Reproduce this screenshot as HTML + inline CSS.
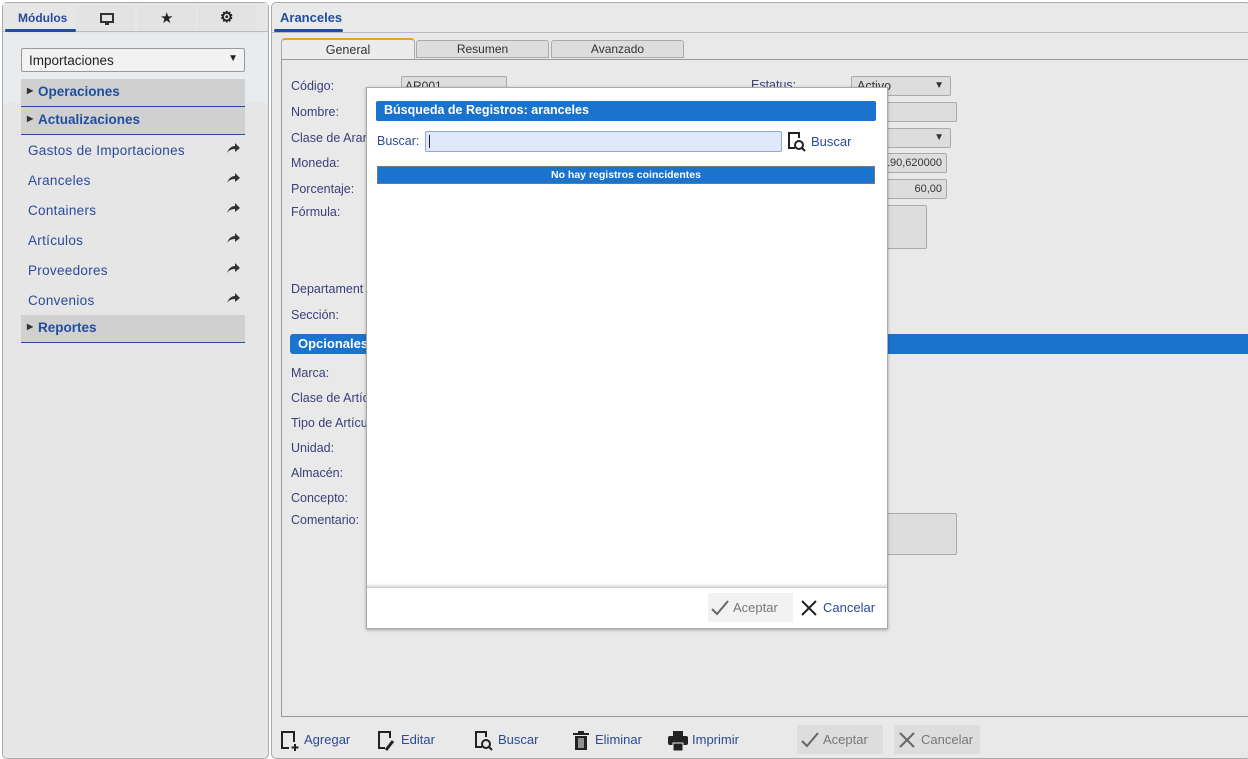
<!DOCTYPE html>
<html><head><meta charset="utf-8"><style>
*{box-sizing:border-box;margin:0;padding:0}
body{width:1248px;height:759px;background:#fff;font-family:"Liberation Sans",sans-serif;font-size:13px;color:#2a3f7e;position:relative;overflow:hidden}
.a{position:absolute}
.lbl{position:absolute;left:291px;font-size:12.5px;color:#3a3f7a}
.inp{position:absolute;background:#ddd;border:1px solid #aaa;border-radius:2px;font-size:11px;color:#333}
.mi{position:absolute;left:28px;font-size:13.5px;color:#2a4a9a;letter-spacing:.3px}
.tb{position:absolute;top:732px;font-size:13px;color:#2a4a9a}
</style></head><body>
<!-- left panel -->
<div class="a" style="left:2px;top:2px;width:267px;height:757px;background:#e6e6e6;border:1px solid #aaa;border-radius:5px"></div>
<div class="a" style="left:3px;top:3px;width:265px;height:29px;background:#e6e6e6;border-bottom:1px solid #bbb"></div>
<div class="a" style="left:76px;top:5px;width:58px;height:26px;background:#e3e3e3"></div>
<div class="a" style="left:138px;top:5px;width:58px;height:26px;background:#e3e3e3"></div>
<div class="a" style="left:198px;top:5px;width:58px;height:26px;background:#e3e3e3"></div>
<div class="a" style="left:18px;top:11px;font-size:12px;font-weight:bold;color:#2a4a9a">Módulos</div>
<div class="a" style="left:5px;top:29px;width:71px;height:3px;background:#1f4ea0;border-radius:2px"></div>
<svg class="a" style="left:100px;top:13px" width="14" height="13"><rect x="1" y="1" width="12" height="8" fill="none" stroke="#333" stroke-width="2"/><rect x="5" y="10" width="4" height="2" fill="#333"/></svg>
<div class="a" style="left:160px;top:9px;font-size:15px;color:#222">★</div>
<div class="a" style="left:220px;top:8px;font-size:15px;color:#222;font-weight:bold">⚙</div>
<div class="a" style="left:3px;top:33px;width:265px;height:70px;background:#e9ecef"></div>
<div class="a" style="left:21px;top:48px;width:224px;height:24px;background:#f2f2f2;border:1px solid #999;border-radius:2px;font-size:13.5px;color:#222;padding:4px 7px">Importaciones<span style="position:absolute;right:6px;top:4px;font-size:10px">▼</span></div>
<div class="a" style="left:21px;top:79px;width:224px;height:28px;background:#d0d0d0;border-bottom:1px solid #1f4ea0;font-weight:bold;font-size:13.5px;padding:5px 0 0 17px;color:#1f4ea0">Operaciones<span style="position:absolute;left:6px;top:7px;font-size:8px;color:#333">▶</span></div>
<div class="a" style="left:21px;top:107px;width:224px;height:28px;background:#d0d0d0;border-bottom:1px solid #1f4ea0;font-weight:bold;font-size:13.5px;padding:5px 0 0 17px;color:#1f4ea0">Actualizaciones<span style="position:absolute;left:6px;top:7px;font-size:8px;color:#333">▶</span></div>
<div class="mi" style="top:143px">Gastos de Importaciones</div>
<div class="mi" style="top:173px">Aranceles</div>
<div class="mi" style="top:203px">Containers</div>
<div class="mi" style="top:233px">Artículos</div>
<div class="mi" style="top:263px">Proveedores</div>
<div class="mi" style="top:293px">Convenios</div>
<svg class="a" style="left:226px;top:143px" width="14" height="165"><g fill="#333">
<path d="M1 10 C3 4 7 3 9 3 V0 L14 5 L9 9 V6 C6 6 3 7 1 10Z"/>
<path transform="translate(0,30)" d="M1 10 C3 4 7 3 9 3 V0 L14 5 L9 9 V6 C6 6 3 7 1 10Z"/>
<path transform="translate(0,60)" d="M1 10 C3 4 7 3 9 3 V0 L14 5 L9 9 V6 C6 6 3 7 1 10Z"/>
<path transform="translate(0,90)" d="M1 10 C3 4 7 3 9 3 V0 L14 5 L9 9 V6 C6 6 3 7 1 10Z"/>
<path transform="translate(0,120)" d="M1 10 C3 4 7 3 9 3 V0 L14 5 L9 9 V6 C6 6 3 7 1 10Z"/>
<path transform="translate(0,150)" d="M1 10 C3 4 7 3 9 3 V0 L14 5 L9 9 V6 C6 6 3 7 1 10Z"/>
</g></svg>
<div class="a" style="left:21px;top:315px;width:224px;height:28px;background:#d0d0d0;border-bottom:1px solid #1f4ea0;font-weight:bold;font-size:13.5px;padding:5px 0 0 17px;color:#1f4ea0">Reportes<span style="position:absolute;left:6px;top:7px;font-size:8px;color:#333">▶</span></div>
<!-- right panel -->
<div class="a" style="left:271px;top:2px;width:980px;height:757px;background:#e9e9e9;border:1px solid #aaa;border-radius:5px"></div>
<div class="a" style="left:272px;top:32px;width:976px;height:1px;background:#bbb"></div>
<div class="a" style="left:280px;top:10px;font-size:13px;font-weight:bold;color:#1f4ea0">Aranceles</div>
<div class="a" style="left:274px;top:29px;width:69px;height:3px;background:#1f4ea0;border-radius:2px"></div>
<div class="a" style="left:281px;top:38px;width:134px;height:22px;background:#ececec;border:1px solid #aaa;border-top:2px solid #f0a020;border-bottom:none;border-radius:4px 4px 0 0;text-align:center;font-size:12.5px;padding-top:3px;color:#333">General</div>
<div class="a" style="left:416px;top:40px;width:133px;height:18px;background:#ddd;border:1px solid #aaa;border-radius:3px 3px 0 0;text-align:center;font-size:12px;color:#333;padding-top:1px">Resumen</div>
<div class="a" style="left:551px;top:40px;width:133px;height:18px;background:#ddd;border:1px solid #aaa;border-radius:3px 3px 0 0;text-align:center;font-size:12px;color:#333;padding-top:1px">Avanzado</div>
<div class="a" style="left:281px;top:59px;width:968px;height:658px;border:1px solid #999;border-right:none;background:#e9e9e9"></div>
<div class="lbl" style="top:79px">Código:</div>
<div class="lbl" style="top:105px">Nombre:</div>
<div class="lbl" style="top:131px">Clase de Aran</div>
<div class="lbl" style="top:156px">Moneda:</div>
<div class="lbl" style="top:182px">Porcentaje:</div>
<div class="lbl" style="top:205px">Fórmula:</div>
<div class="lbl" style="top:282px">Departament</div>
<div class="lbl" style="top:308px">Sección:</div>
<div class="a" style="left:290px;top:334px;width:960px;height:20px;background:#1a73cc;border-radius:3px 0 0 3px;color:#fff;font-weight:bold;font-size:13px;padding:2px 8px">Opcionales</div>
<div class="lbl" style="top:366px">Marca:</div>
<div class="lbl" style="top:391px">Clase de Artíc</div>
<div class="lbl" style="top:416px">Tipo de Artícu</div>
<div class="lbl" style="top:441px">Unidad:</div>
<div class="lbl" style="top:466px">Almacén:</div>
<div class="lbl" style="top:491px">Concepto:</div>
<div class="lbl" style="top:513px">Comentario:</div>
<div class="inp" style="left:401px;top:76px;width:106px;height:20px;padding:2px 3px;font-size:12px">AR001</div>
<div class="a" style="left:751px;top:78px;font-size:12.5px;color:#3a3f7a">Estatus:</div>
<div class="inp" style="left:851px;top:76px;width:100px;height:20px;padding:2px 5px;font-size:12.5px">Activo<span style="position:absolute;right:6px;top:3px;font-size:10px">▼</span></div>
<div class="inp" style="left:860px;top:102px;width:97px;height:20px"></div>
<div class="inp" style="left:860px;top:128px;width:91px;height:20px"><span style="position:absolute;right:6px;top:3px;font-size:10px">▼</span></div>
<div class="inp" style="left:860px;top:153px;width:87px;height:20px;text-align:right;padding:3px 4px">190,620000</div>
<div class="inp" style="left:860px;top:179px;width:87px;height:20px;text-align:right;padding:3px 4px">60,00</div>
<div class="inp" style="left:860px;top:205px;width:67px;height:44px"></div>
<div class="inp" style="left:860px;top:513px;width:97px;height:42px"></div>
<!-- modal -->
<div class="a" style="left:366px;top:87px;width:522px;height:542px;background:#fff;border:1px solid #aaa;box-shadow:0 1px 3px rgba(0,0,0,.3)"></div>
<div class="a" style="left:376px;top:101px;width:500px;height:20px;background:#1a73cc;border-radius:2px;color:#fff;font-weight:bold;font-size:12.5px;padding:2px 8px">Búsqueda de Registros: aranceles</div>
<div class="a" style="left:377px;top:134px;font-size:12.5px;color:#2a4a9a">Buscar:</div>
<div class="a" style="left:425px;top:131px;width:357px;height:21px;background:#e0e8fa;border:1px solid #8aa8d8;border-radius:2px"><div style="position:absolute;left:3px;top:3px;width:1px;height:13px;background:#222"></div></div>
<svg class="a" style="left:787px;top:131px" width="20" height="22"><path d="M8 17H2V2H12V7" fill="none" stroke="#222" stroke-width="2"/><circle cx="12" cy="14" r="4" fill="none" stroke="#222" stroke-width="2"/><path d="M15 17L18 20" stroke="#222" stroke-width="2"/></svg>
<div class="a" style="left:811px;top:134px;font-size:13px;color:#2a4a9a">Buscar</div>
<div class="a" style="left:377px;top:166px;width:498px;height:18px;background:#1a73cc;border:1px solid #777;color:#fff;font-size:10.5px;text-align:center;padding-top:2px;font-weight:bold">No hay registros coincidentes</div>
<div class="a" style="left:367px;top:583px;width:520px;height:5px;background:linear-gradient(#fff,#ddd);border-bottom:1px solid #ccc"></div>
<div class="a" style="left:708px;top:593px;width:85px;height:29px;background:#f2f2f2"></div>
<svg class="a" style="left:711px;top:600px" width="18" height="16"><path d="M1 9L6 14L17 1" fill="none" stroke="#666" stroke-width="2"/></svg>
<div class="a" style="left:733px;top:600px;font-size:13px;color:#777">Aceptar</div>
<svg class="a" style="left:801px;top:600px" width="16" height="16"><path d="M1 1L15 15M15 1L1 15" stroke="#222" stroke-width="2"/></svg>
<div class="a" style="left:823px;top:600px;font-size:13px;color:#2a4a9a">Cancelar</div>
<!-- toolbar -->
<svg class="a" style="left:280px;top:730px" width="20" height="22"><path d="M9 18H2V2H14V12" fill="none" stroke="#222" stroke-width="2"/><path d="M15 14V21M11.5 17.5H18.5" stroke="#222" stroke-width="2"/></svg>
<div class="tb" style="left:304px">Agregar</div>
<svg class="a" style="left:377px;top:730px" width="20" height="22"><path d="M8 18H2V2H13V8" fill="none" stroke="#222" stroke-width="2"/><path d="M9 20L16 11" stroke="#222" stroke-width="3"/></svg>
<div class="tb" style="left:401px">Editar</div>
<svg class="a" style="left:474px;top:730px" width="20" height="22"><path d="M8 17H2V2H12V7" fill="none" stroke="#222" stroke-width="2"/><circle cx="12" cy="14" r="4" fill="none" stroke="#222" stroke-width="2"/><path d="M15 17L18 20" stroke="#222" stroke-width="2"/></svg>
<div class="tb" style="left:498px">Buscar</div>
<svg class="a" style="left:572px;top:731px" width="18" height="20"><rect x="1" y="2" width="16" height="2" fill="#222"/><rect x="6" y="0" width="6" height="2" fill="#222"/><path d="M3 5H15V19H3Z" fill="#222"/><path d="M7 7V17M9 7V17M11 7V17" stroke="#fff" stroke-width="1"/></svg>
<div class="tb" style="left:595px">Eliminar</div>
<svg class="a" style="left:668px;top:731px" width="20" height="20"><rect x="5" y="0" width="10" height="5" fill="#222"/><rect x="0" y="5" width="20" height="9" rx="2" fill="#222"/><rect x="5" y="12" width="10" height="8" fill="#222" stroke="#e9e9e9" stroke-width="1"/></svg>
<div class="tb" style="left:692px">Imprimir</div>
<div class="a" style="left:797px;top:725px;width:86px;height:29px;background:#ddd"></div>
<svg class="a" style="left:801px;top:732px" width="18" height="16"><path d="M1 9L6 14L17 1" fill="none" stroke="#666" stroke-width="2"/></svg>
<div class="tb" style="left:823px;color:#777">Aceptar</div>
<div class="a" style="left:894px;top:725px;width:86px;height:29px;background:#ddd"></div>
<svg class="a" style="left:899px;top:732px" width="16" height="16"><path d="M1 1L15 15M15 1L1 15" stroke="#666" stroke-width="2"/></svg>
<div class="tb" style="left:921px;color:#777">Cancelar</div>
</body></html>
